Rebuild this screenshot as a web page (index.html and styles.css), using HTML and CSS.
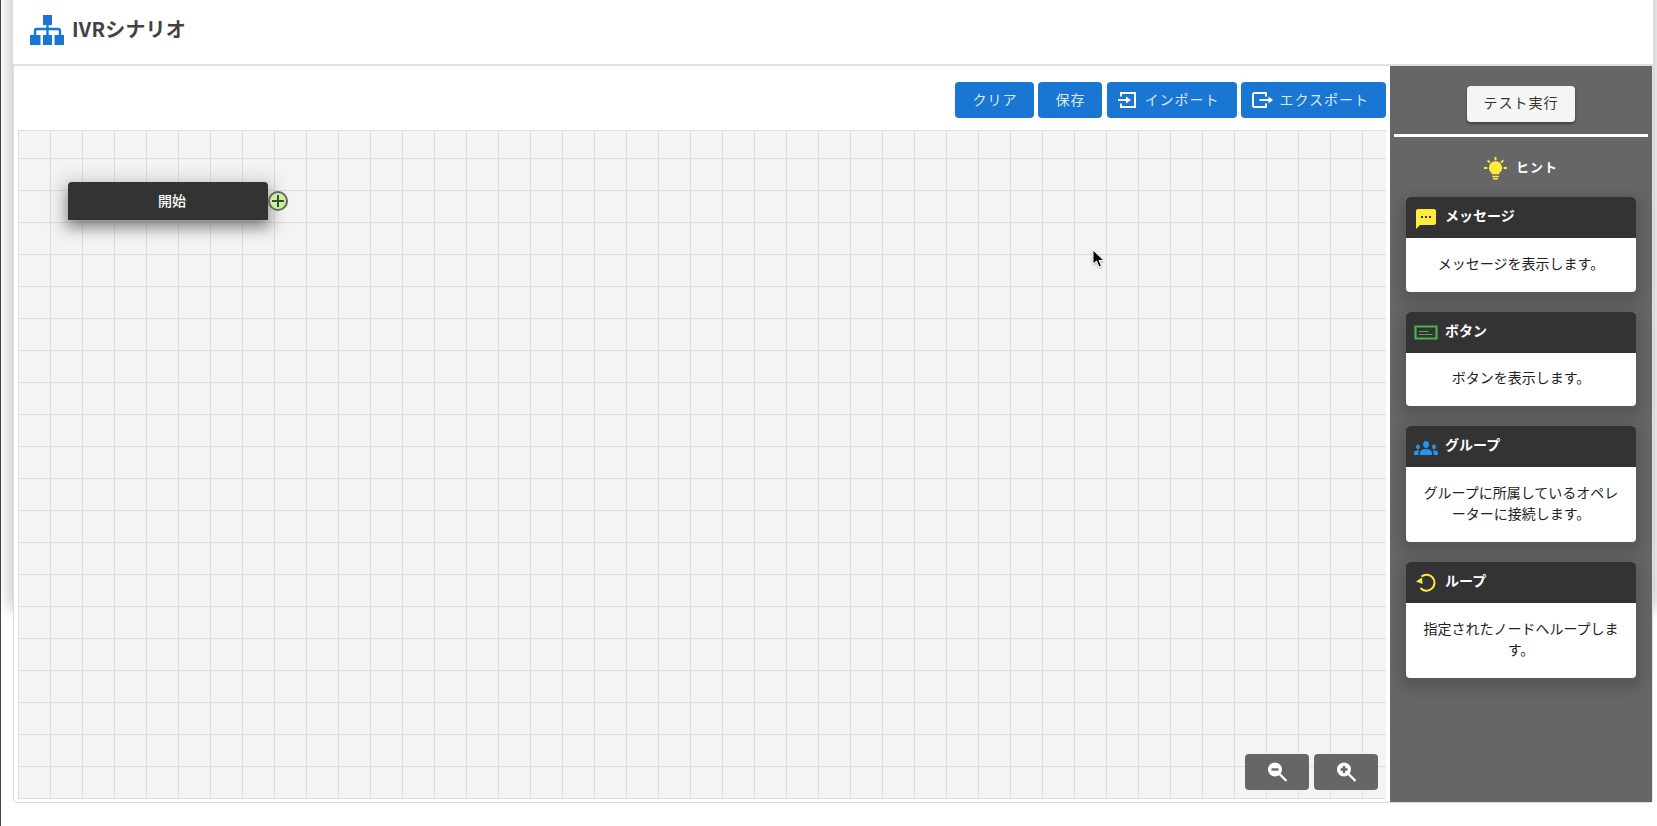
FILE: index.html
```html
<!DOCTYPE html>
<html lang="ja">
<head>
<meta charset="utf-8">
<title>IVRシナリオ</title>
<link rel="stylesheet" href="styles.css">
</head>
<body>
<div class="shell">
  <div class="sheet">
    <header class="topbar">
      <svg class="logo" viewBox="0 0 34 30" aria-hidden="true">
        <path class="logo-fill" d="M13 0h9v10h-9zM0 20h10.500v10H0zM13 20h9v10h-9zM24.500 20H34v10h-9.500z"/>
        <path class="logo-line" d="M5 21v-5q0-2 2-2h21q2 0 2 2v5M17.500 8v13"/>
      </svg>
      <h1 class="title">IVRシナリオ</h1>
    </header>
    <div class="workspace">
      <main class="editor">
        <div class="toolbar">
          <button class="btn">クリア</button>
          <button class="btn">保存</button>
          <button class="btn btn-icon btn-import">
            <svg class="import-icon" viewBox="0 0 20 20" aria-hidden="true"><path class="io-stroke" d="M4 6.500V3h14v14H4v-3.500M1 10h9"/><path class="io-head" d="M9 6.500 14 10l-5 3.500z"/></svg>
            <span class="btn-label">インポート</span>
          </button>
          <button class="btn btn-icon btn-export">
            <svg class="export-icon" viewBox="0 0 24 24" aria-hidden="true"><path class="io-stroke" d="M17 8.500V5H5.500a1.500 1.500 0 0 0-1.500 1.500v11A1.500 1.500 0 0 0 5.500 19H17v-3.500M10.500 12H20"/><path class="io-head" d="M19.500 8.500 24 12l-4.500 3.500z"/></svg>
            <span class="btn-label">エクスポート</span>
          </button>
        </div>
        <div class="canvas">
          <div class="node">開始</div>
          <svg class="handle" viewBox="0 0 22 22" aria-hidden="true">
            <circle class="handle-disc" cx="11" cy="11" r="9"/>
            <path class="handle-plus" d="M11 5v12M5 11h12"/>
          </svg>
          <svg class="pointer" viewBox="0 0 14 20" aria-hidden="true">
            <path class="pointer-shape" d="M1 1v14l3.500-3 2.500 6 2.500-1-2.500-5.500H12z"/>
          </svg>
          <div class="zoom-controls">
            <button class="zoom-btn" aria-label="縮小">
              <svg class="zoom-icon" viewBox="0 0 24 24" aria-hidden="true"><circle class="zoom-disc" cx="10" cy="9.500" r="7"/><path class="zoom-handle" d="m14.500 14 7 7"/><path class="zoom-mark" d="M6.500 9.500h7"/></svg>
            </button>
            <button class="zoom-btn" aria-label="拡大">
              <svg class="zoom-icon" viewBox="0 0 24 24" aria-hidden="true"><circle class="zoom-disc" cx="10" cy="9.500" r="7"/><path class="zoom-handle" d="m14.500 14 7 7"/><path class="zoom-mark" d="M6.500 9.500h7M10 6v7"/></svg>
            </button>
          </div>
        </div>
      </main>
      <aside class="panel">
        <div class="run-row"><button class="run-btn">テスト実行</button></div>
        <hr class="rule">
        <div class="hint-title">
          <svg class="bulb" viewBox="0 0 24 24" aria-hidden="true">
            <path class="bulb-rays" d="M12 0v3.500M3.800 3.500l2.400 2.400M20.200 3.500l-2.400 2.400M0 11.500h3.500M20.500 11.500H24"/>
            <path class="bulb-fill" d="M12 4.500a6.800 6.800 0 0 0-4 12.300V18h8v-1.200a6.800 6.800 0 0 0-4-12.300zM8.500 19.500h7V21h-7zM9.500 22h5v1.500h-5z"/>
          </svg>
          <span class="hint-label">ヒント</span>
        </div>
        <div class="hints">
          <section class="hint">
            <div class="hint-head">
              <svg class="hint-icon icon-yellow" viewBox="0 0 24 24" aria-hidden="true"><path d="M20 2H4c-1.100 0-1.990.9-1.990 2L2 22l4-4h14c1.100 0 2-.9 2-2V4c0-1.100-.9-2-2-2zM9 11H7V9h2v2zm4 0h-2V9h2v2zm4 0h-2V9h2v2z"/></svg>
              <span class="hint-name">メッセージ</span>
            </div>
            <p class="hint-body">メッセージを表示します。</p>
          </section>
          <section class="hint">
            <div class="hint-head">
              <svg class="hint-icon" viewBox="0 0 24 24" aria-hidden="true"><path class="button-outline" d="M1.500 5.500h21v12h-21z"/><path class="button-lines" d="M5 10.500h9.500M5 13.500h13.500"/></svg>
              <span class="hint-name">ボタン</span>
            </div>
            <p class="hint-body">ボタンを表示します。</p>
          </section>
          <section class="hint">
            <div class="hint-head">
              <svg class="hint-icon icon-blue icon-groups" viewBox="0 6 24 12" preserveAspectRatio="none" aria-hidden="true"><path d="M12 12.750c1.630 0 3.070.39 4.240.9 1.080.48 1.760 1.560 1.760 2.730V18H6v-1.610c0-1.180.68-2.260 1.760-2.730 1.170-.52 2.610-.91 4.240-.91zM4 13c1.100 0 2-.9 2-2s-.9-2-2-2-2 .9-2 2 .9 2 2 2zm1.130 1.100C4.760 14.040 4.390 14 4 14c-.99 0-1.930.21-2.780.58C.48 14.900 0 15.620 0 16.430V18h4.500v-1.610c0-.83.23-1.610.63-2.290zM20 13c1.100 0 2-.9 2-2s-.9-2-2-2-2 .9-2 2 .9 2 2 2zm4 3.430c0-.81-.48-1.530-1.220-1.850C21.930 14.210 20.990 14 20 14c-.39 0-.76.04-1.130.1.4.68.63 1.460.63 2.290V18H24v-1.570zM12 6c1.660 0 3 1.340 3 3s-1.340 3-3 3-3-1.340-3-3 1.340-3 3-3z"/></svg>
              <span class="hint-name">グループ</span>
            </div>
            <p class="hint-body">グループに所属しているオペレーターに接続します。</p>
          </section>
          <section class="hint">
            <div class="hint-head">
              <svg class="hint-icon icon-yellow icon-loop" viewBox="0 0 24 24" aria-hidden="true"><path class="loop-arc" d="M7.500 6.500A8 8 0 1 1 6.500 18"/><path d="M2 11.500 8 7.500 8.500 14z"/></svg>
              <span class="hint-name">ループ</span>
            </div>
            <p class="hint-body">指定されたノードへループします。</p>
          </section>
        </div>
      </aside>
    </div>
  </div>
</div>
</body>
</html>
```
FILE: styles.css
```css
* { box-sizing: border-box; }
html, body { margin: 0; height: 100%; background: #fff; }
body {
  font-family: "Noto Sans CJK JP", "Noto Sans", sans-serif;
  color: #333;
  overflow: hidden;
}
button { font-family: inherit; cursor: pointer; }

.shell {
  position: relative;
  height: 826px;
  border-left: 1px solid #444;
  padding: 0 4px 0 12px;
  overflow: hidden;
}
.shell::before {
  content: "";
  position: absolute;
  left: 12px;
  right: 4px;
  top: -40px;
  height: 648px;
  border-radius: 8px;
  box-shadow: 0 0 14px 4px rgba(0, 0, 0, .22);
}
.sheet {
  position: relative;
  height: 803px;
  background: #fff;
  display: flex;
  flex-direction: column;
}

.topbar {
  height: 66px;
  flex: none;
  display: flex;
  align-items: center;
  padding: 0 0 6px 17px;
  border-bottom: 2px solid #e0e0e0;
}
.logo { width: 34px; height: 30px; margin-right: 8px; margin-top: 2px; flex: none; }
.logo-fill { fill: #1976d2; }
.logo-line { fill: none; stroke: #1976d2; stroke-width: 2.4; }
.title {
  margin: 0;
  font-size: 20px;
  font-weight: 700;
  line-height: 28px;
  letter-spacing: .2px;
  color: #424242;
}

.workspace {
  flex: 1;
  min-height: 0;
  display: flex;
  border: 1px solid #ddd;
  border-top: 0;
  border-right: 1px solid #e4e4e4;
  border-radius: 0 0 4px 4px;
}
.editor {
  flex: 1;
  min-width: 0;
  display: flex;
  flex-direction: column;
  padding: 16px 4px 3px 4px;
}
.toolbar {
  display: flex;
  justify-content: flex-end;
  gap: 4px;
  margin-bottom: 12px;
  flex: none;
}
.btn {
  height: 36px;
  border: 0;
  border-radius: 4px;
  background: #1976d2;
  color: rgba(255, 255, 255, .86);
  padding: 0 17px 3px;
  font-size: 14px;
  letter-spacing: 1px;
  display: flex;
  align-items: center;
}
.btn-icon { padding: 0 17px 0 10px; }
.btn-import { margin-left: 1px; padding-right: 18px; }
.btn-export { padding-left: 8px; }
.btn-label { margin-bottom: 3px; }
.import-icon { width: 20px; height: 20px; margin-right: 7px; flex: none; }
.export-icon { width: 24px; height: 24px; margin-right: 6px; flex: none; }
.io-stroke { fill: none; stroke: #fff; stroke-width: 2; }
.io-head { fill: #fff; }

.canvas {
  position: relative;
  flex: 1;
  min-height: 0;
  border-left: 1px solid #ddd;
  border-top: 1px solid #ddd;
  background-color: #f4f4f4;
  background-image:
    linear-gradient(to right, #ddd 1px, transparent 1px),
    linear-gradient(to bottom, #ddd 1px, transparent 1px);
  background-size: 32px 32px;
  background-position: 31px 27px;
}
.node {
  position: absolute;
  left: 49px;
  top: 51px;
  width: 200px;
  height: 38px;
  padding-left: 8px;
  background: #333;
  border-radius: 4px 4px 0 0;
  color: #fff;
  font-size: 14px;
  font-weight: 500;
  line-height: 36px;
  text-align: center;
  box-shadow: 0 7px 14px rgba(0, 0, 0, .42), 0 3px 16px 11px rgba(0, 0, 0, .07);
}
.handle { position: absolute; left: 248px; top: 59px; width: 22px; height: 22px; }
.handle-disc { fill: #c6f09b; stroke: #666; stroke-width: 2; }
.handle-plus { fill: none; stroke: #3f4a3a; stroke-width: 2; }
.pointer {
  position: absolute;
  left: 1073px;
  top: 118px;
  width: 14px;
  height: 20px;
  filter: drop-shadow(0 1px 1px rgba(0, 0, 0, .3));
}
.pointer-shape { fill: #000; stroke: #fff; stroke-width: 1; }
.zoom-controls {
  position: absolute;
  right: 8px;
  bottom: 9px;
  display: flex;
  gap: 5px;
}
.zoom-btn {
  width: 64px;
  height: 36px;
  border: 0;
  padding: 0;
  border-radius: 4px;
  background: #666;
  display: flex;
  align-items: center;
  justify-content: center;
}
.zoom-icon { width: 24px; height: 24px; margin-right: 1px; }
.zoom-disc { fill: #fff; }
.zoom-handle { fill: none; stroke: #fff; stroke-width: 2.400; }
.zoom-mark { fill: none; stroke: #666; stroke-width: 2.400; }

.panel {
  flex: none;
  width: 262px;
  background: #666;
  padding-top: 20px;
}
.run-row { display: flex; justify-content: center; }
.run-btn {
  height: 36px;
  width: 108px;
  border: 0;
  border-radius: 4px;
  background: #f5f5f5;
  color: #333;
  font-size: 14px;
  letter-spacing: 1px;
  padding: 0 0 5px;
  box-shadow: 0 2px 3px rgba(0, 0, 0, .35);
}
.rule {
  height: 3px;
  margin: 12px 4px 0;
  border: 0;
  background: #fff;
}
.hint-title {
  display: flex;
  align-items: center;
  justify-content: center;
  height: 24px;
  margin: 20px 0 16px;
  color: #fff;
  font-size: 13px;
  font-weight: 700;
  letter-spacing: 1px;
}
.hint-label { margin: 0 0 5px -1px; }
.bulb { width: 23px; height: 23px; margin: 0 10px 2px 0; }
.bulb-rays { fill: none; stroke: #ffeb3b; stroke-width: 2; }
.bulb-fill { fill: #ffeb3b; }
.hints {
  display: flex;
  flex-direction: column;
  gap: 20px;
  padding: 0 16px;
}
.hint {
  background: #fff;
  border-radius: 4px;
  box-shadow: 0 6px 14px 6px rgba(0, 0, 0, .15);
}
.hint-head {
  height: 41px;
  background: #333;
  border-radius: 4px 4px 0 0;
  color: #fff;
  font-size: 14px;
  font-weight: 700;
  display: flex;
  align-items: center;
  padding-left: 8px;
}
.hint-name { margin-bottom: 5px; }
.hint-icon { width: 24px; height: 24px; margin-right: 7px; margin-top: 2px; flex: none; }
.icon-groups { height: 14px; }
.icon-loop { margin-top: -2px; }
.icon-yellow { fill: #ffeb3b; }
.icon-blue { fill: #2196f3; }
.button-outline { fill: none; stroke: #4caf50; stroke-width: 2.200; }
.button-lines { fill: none; stroke: #4caf50; stroke-width: 1.200; }
.loop-arc { fill: none; stroke: #ffeb3b; stroke-width: 2; }
.hint-body {
  margin: 0;
  padding: 14.500px 16px 17.500px 16px;
  font-size: 14px;
  line-height: 21.500px;
  text-align: center;
  color: #222;
}
```
